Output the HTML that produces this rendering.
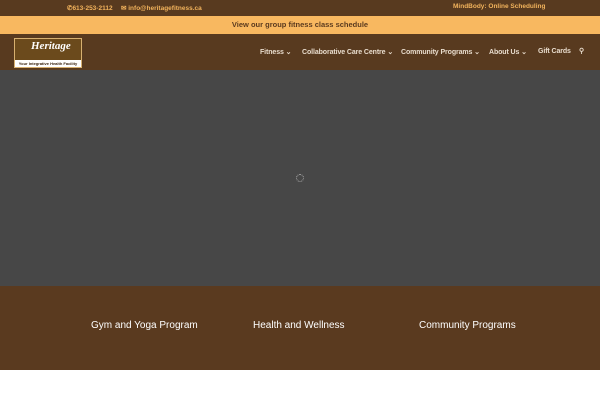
<!DOCTYPE html><html><head><style>
body{margin:0;width:600px;height:400px;overflow:hidden;background:#fff;font-family:"Liberation Sans",sans-serif;font-weight:bold}
.top{position:absolute;left:0;top:0;width:600px;height:16px;background:#583a1f;color:#f2b35c;font-size:6.5px}
.bar{position:absolute;top:16px;height:18px;width:600px;background:#f8b860;color:#5a3a1f;font-size:7.5px;text-align:center;line-height:18px}
.hd{position:absolute;top:34px;height:36px;width:600px;background:#583a1f}
.nav{position:absolute;color:#e8dccd;font-size:7px;letter-spacing:-0.1px}
.gray{position:absolute;top:70px;height:216px;width:600px;background:#474747}
.br{position:absolute;top:286px;height:84px;width:600px;background:#5a3a1f;color:#fff;font-size:10px;font-weight:normal}
</style></head><body>
<div class="top"><span style="position:absolute;left:67px;top:4px">&#9990;613-253-2112</span><span style="position:absolute;left:121px;top:4px">&#9993; info@heritagefitness.ca</span><span style="position:absolute;left:453px;top:3px">MindBody: Online Scheduling</span></div>
<div class="bar">View our group fitness class schedule</div>
<div class="hd">
<div style="position:absolute;left:14px;top:4px;width:66px;height:28px;background:#6b4a1c;border:1px solid #d7b070">
<div style="color:#fff;font-family:'Liberation Serif',serif;font-style:italic;font-size:11px;position:absolute;left:16px;top:1px">Heritage</div>
<div style="position:absolute;left:0;bottom:0;width:66px;height:7px;background:#fff;color:#3a2410;font-size:4px;line-height:7px;text-align:center">Your Integrative Health Facility</div></div>
<span class="nav" style="left:260px;top:14px">Fitness ⌄</span>
<span class="nav" style="left:302px;top:14px">Collaborative Care Centre ⌄</span>
<span class="nav" style="left:401px;top:14px">Community Programs ⌄</span>
<span class="nav" style="left:489px;top:14px">About Us ⌄</span>
<span class="nav" style="left:538px;top:14px">Gift Cards</span>
<span class="nav" style="left:579px;top:13px">&#9906;</span>
</div>
<div class="gray"><div style="position:absolute;left:296px;top:104px;width:6px;height:6px;border:1px dotted #aaa;border-radius:50%"></div></div>
<div class="br"><span style="position:absolute;left:91px;top:34px">Gym and Yoga Program</span><span style="position:absolute;left:253px;top:34px">Health and Wellness</span><span style="position:absolute;left:419px;top:34px">Community Programs</span></div>
</body></html>
